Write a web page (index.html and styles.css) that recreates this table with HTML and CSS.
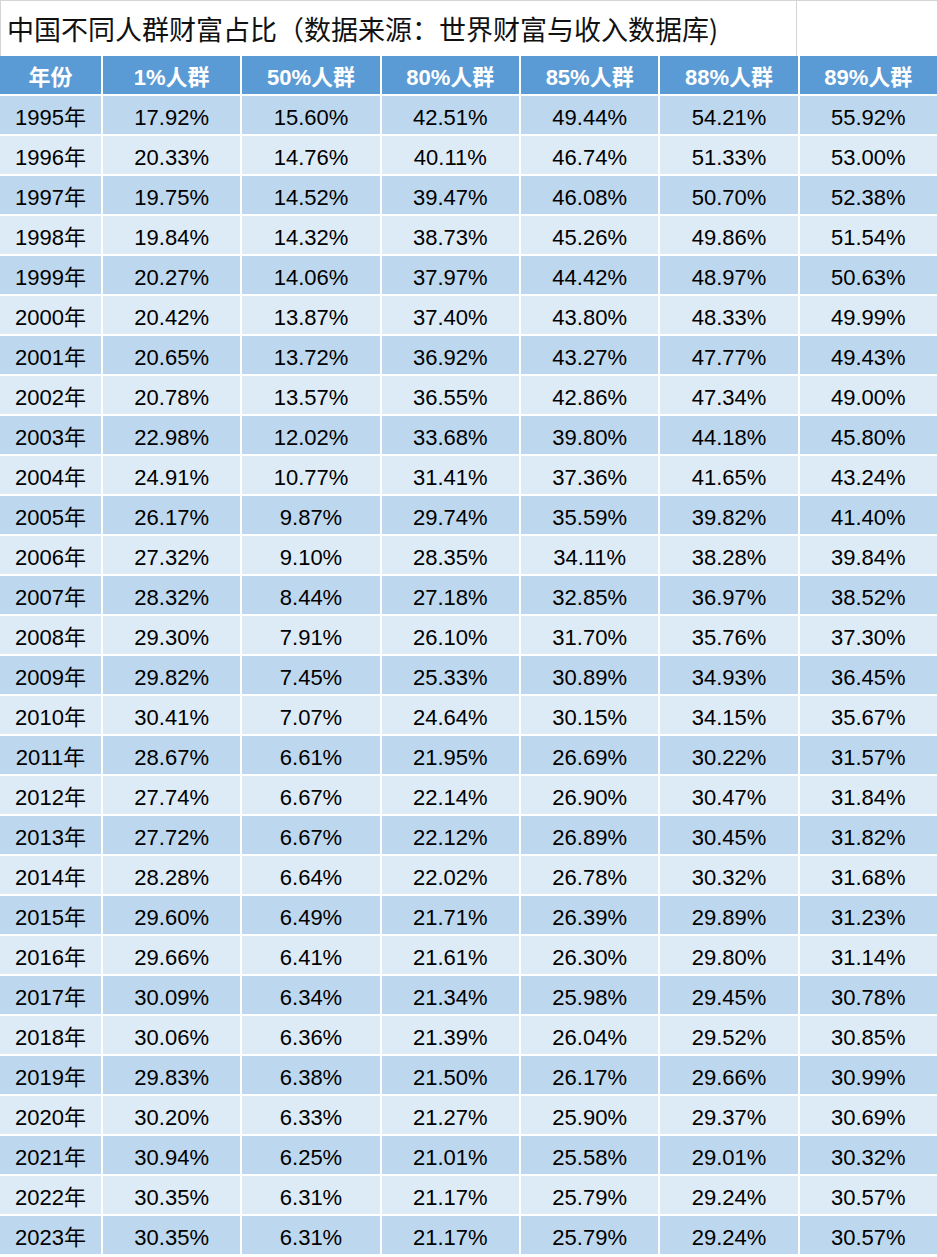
FILE: index.html
```html
<!DOCTYPE html>
<html lang="zh">
<head>
<meta charset="utf-8">
<link rel="stylesheet" href="styles.css">
</head>
<body>
<div class="sheet">
  <div class="title-row">
    <div class="title">中国不同人群财富占比（数据来源：世界财富与收入数据库)</div>
    <div class="title-empty"></div>
  </div>
  <div class="grid" id="grid">
    <div class="hd"><span class="cjk">年份</span></div>
    <div class="hd">1%<span class="cjk">人群</span></div>
    <div class="hd">50%<span class="cjk">人群</span></div>
    <div class="hd">80%<span class="cjk">人群</span></div>
    <div class="hd">85%<span class="cjk">人群</span></div>
    <div class="hd">88%<span class="cjk">人群</span></div>
    <div class="hd">89%<span class="cjk">人群</span></div>
  </div>
</div>
<script src="script.js"></script>
</body>
</html>
```

FILE: script.js
```js
const rows = [
["1995","17.92%","15.60%","42.51%","49.44%","54.21%","55.92%"],
["1996","20.33%","14.76%","40.11%","46.74%","51.33%","53.00%"],
["1997","19.75%","14.52%","39.47%","46.08%","50.70%","52.38%"],
["1998","19.84%","14.32%","38.73%","45.26%","49.86%","51.54%"],
["1999","20.27%","14.06%","37.97%","44.42%","48.97%","50.63%"],
["2000","20.42%","13.87%","37.40%","43.80%","48.33%","49.99%"],
["2001","20.65%","13.72%","36.92%","43.27%","47.77%","49.43%"],
["2002","20.78%","13.57%","36.55%","42.86%","47.34%","49.00%"],
["2003","22.98%","12.02%","33.68%","39.80%","44.18%","45.80%"],
["2004","24.91%","10.77%","31.41%","37.36%","41.65%","43.24%"],
["2005","26.17%","9.87%","29.74%","35.59%","39.82%","41.40%"],
["2006","27.32%","9.10%","28.35%","34.11%","38.28%","39.84%"],
["2007","28.32%","8.44%","27.18%","32.85%","36.97%","38.52%"],
["2008","29.30%","7.91%","26.10%","31.70%","35.76%","37.30%"],
["2009","29.82%","7.45%","25.33%","30.89%","34.93%","36.45%"],
["2010","30.41%","7.07%","24.64%","30.15%","34.15%","35.67%"],
["2011","28.67%","6.61%","21.95%","26.69%","30.22%","31.57%"],
["2012","27.74%","6.67%","22.14%","26.90%","30.47%","31.84%"],
["2013","27.72%","6.67%","22.12%","26.89%","30.45%","31.82%"],
["2014","28.28%","6.64%","22.02%","26.78%","30.32%","31.68%"],
["2015","29.60%","6.49%","21.71%","26.39%","29.89%","31.23%"],
["2016","29.66%","6.41%","21.61%","26.30%","29.80%","31.14%"],
["2017","30.09%","6.34%","21.34%","25.98%","29.45%","30.78%"],
["2018","30.06%","6.36%","21.39%","26.04%","29.52%","30.85%"],
["2019","29.83%","6.38%","21.50%","26.17%","29.66%","30.99%"],
["2020","30.20%","6.33%","21.27%","25.90%","29.37%","30.69%"],
["2021","30.94%","6.25%","21.01%","25.58%","29.01%","30.32%"],
["2022","30.35%","6.31%","21.17%","25.79%","29.24%","30.57%"],
["2023","30.35%","6.31%","21.17%","25.79%","29.24%","30.57%"]
];
const grid = document.getElementById("grid");
rows.forEach((r, i) => {
  r.forEach((v, j) => {
    const d = document.createElement("div");
    d.className = "cell " + (i % 2 === 0 ? "odd" : "even");
    d.textContent = v;
    if (j === 0) {
      const s = document.createElement("span");
      s.className = "cjk";
      s.textContent = "年";
      d.appendChild(s);
    }
    grid.appendChild(d);
  });
});
```

FILE: styles.css
```css
html, body {
  margin: 0;
  padding: 0;
  background: #ffffff;
}
.sheet {
  width: 937px;
  font-family: "Liberation Sans", "Noto Sans CJK SC", sans-serif;
  color: #000;
}
.title-row {
  display: flex;
  height: 55px;
  border-top: 1px solid #d4d4d4;
  border-left: 1px solid #d4d4d4;
}
.title {
  width: 796px;
  border-right: 1px solid #d4d4d4;
  font-family: "Noto Sans CJK SC", sans-serif;
  font-size: 27px;
  line-height: 55px;
  padding-left: 6px;
  box-sizing: border-box;
  white-space: nowrap;
  color: #111;
}
.title-empty {
  flex: 1;
}
.grid {
  display: grid;
  grid-template-columns: 101px repeat(6, 1fr);
  grid-auto-rows: 38px;
  column-gap: 2px;
  row-gap: 2px;
  background: #ffffff;
}
.hd {
  background: #5b9bd5;
  color: #ffffff;
  font-weight: bold;
  font-size: 22px;
  text-align: center;
  white-space: nowrap;
  padding-top: 5px;
  line-height: 33px;
  box-sizing: border-box;
}
.cell {
  font-size: 22px;
  text-align: center;
  white-space: nowrap;
  padding-top: 6px;
  line-height: 32px;
  box-sizing: border-box;
}
.cjk {
  font-family: "Noto Sans CJK SC", sans-serif;
  line-height: 0;
}
.cell.odd {
  background: #bdd7ee;
}
.cell.even {
  background: #ddebf7;
}
```
